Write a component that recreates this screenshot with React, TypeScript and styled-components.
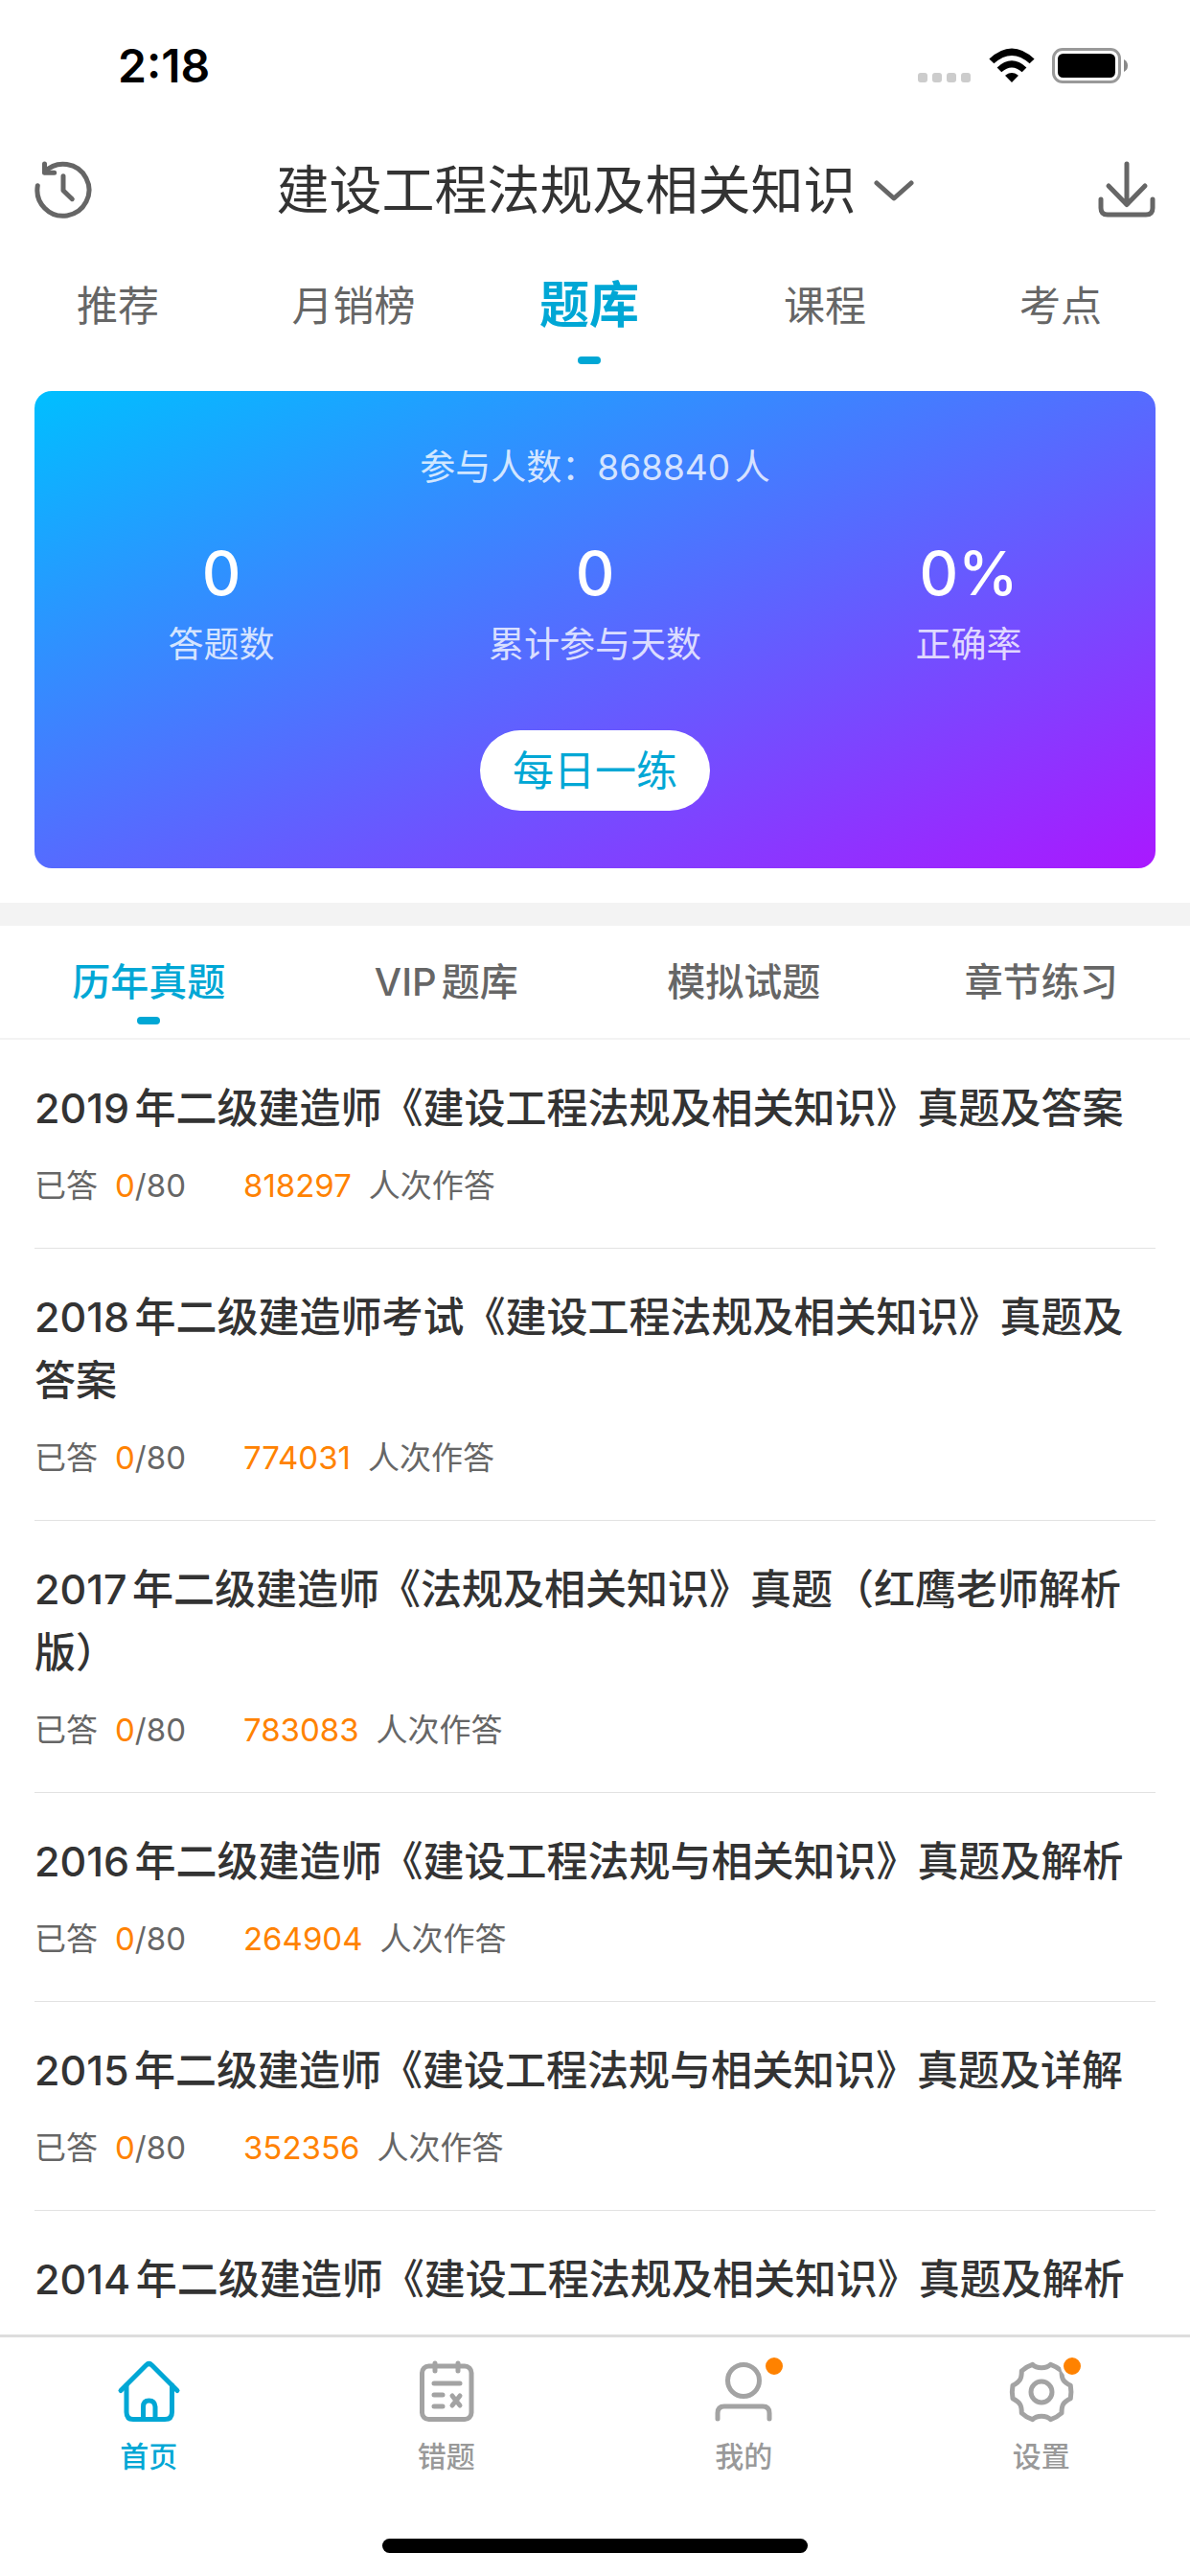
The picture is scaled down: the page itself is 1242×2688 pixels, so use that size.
import React, { useState } from "react";
import styled, { createGlobalStyle } from "styled-components";

const brand = "#00a7d5";
const orange = "#ff8200";

const GlobalStyle = createGlobalStyle`
  * { box-sizing: border-box; }
  html, body, #root { height: 100%; }
  body {
    margin: 0;
    background: #fff;
    color: #333;
    font-family: Inter, "Noto Sans CJK SC", sans-serif;
    text-autospace: normal;
  }
  button {
    margin: 0;
    padding: 0;
    border: 0;
    background: none;
    font: inherit;
    color: inherit;
    cursor: pointer;
  }
  h1, h2, p, ul, dl, dd { margin: 0; padding: 0; }
  svg { display: block; }
`;

const Screen = styled.div`
  display: flex;
  flex-direction: column;
  height: 100vh;
  overflow: hidden;
`;

const StatusBar = styled.div`
  display: flex;
  flex: none;
  align-items: center;
  justify-content: space-between;
  height: 132px;
  padding: 5px 64px 0 123px;
  color: #000;
`;

const Clock = styled.time`
  font-size: 48px;
  font-weight: 600;
  line-height: 60px;
`;

const StatusIcons = styled.div`
  display: flex;
  align-items: center;
  gap: 18px;
`;

const Header = styled.header`
  display: flex;
  flex: none;
  align-items: center;
  justify-content: space-between;
  height: 132px;
  padding: 0 36px;
`;

const IconButton = styled.button`
  display: block;
  width: 60px;
  height: 60px;
  color: #666;
`;

const SubjectButton = styled.button`
  display: flex;
  align-items: center;
  gap: 18px;
  color: #666;
`;

const Subject = styled.h1`
  color: #333;
  font-size: 55px;
  font-weight: 400;
  line-height: 72px;
`;

const Marker = styled.span`
  position: absolute;
  bottom: 0;
  left: 50%;
  width: 24px;
  height: 8px;
  margin-left: -12px;
  border-radius: 4px;
  background: ${brand};
`;

const ChannelTabs = styled.nav`
  display: grid;
  flex: none;
  grid-template-columns: repeat(5, 1fr);
  height: 132px;
  padding: 0 12px 16px 0;
`;

const ChannelTab = styled.button<{ $active: boolean }>`
  position: relative;
  padding-bottom: 6px;
  color: ${(p) => (p.$active ? brand : "#666")};
  font-size: ${(p) => (p.$active ? 52 : 43)}px;
  font-weight: ${(p) => (p.$active ? 700 : 400)};
  line-height: 64px;
`;

const CardArea = styled.section`
  flex: none;
  padding: 12px 36px 36px;
  border-bottom: 24px solid #f3f3f3;
`;

const Card = styled.div`
  display: flex;
  flex-direction: column;
  align-items: center;
  padding: 56px 0 60px;
  border-radius: 18px;
  background: linear-gradient(to bottom right, #00bfff, #aa18ff);
  color: rgba(255, 255, 255, 0.8);
  font-size: 37px;
  line-height: 48px;
`;

const Stats = styled.dl`
  display: grid;
  grid-template-columns: repeat(3, 1fr);
  width: 100%;
  margin: 44px 0 65px;
`;

const Stat = styled.div`
  display: flex;
  flex-direction: column-reverse;
  align-items: center;
  gap: 9px;
`;

const StatValue = styled.dd`
  color: #fff;
  font-size: 63px;
  font-weight: 500;
  line-height: 84px;
`;

const DailyButton = styled.button`
  width: 240px;
  height: 84px;
  border-radius: 42px;
  background: #fff;
  color: ${brand};
  font-size: 43px;
  line-height: 84px;
`;

const PaperTabs = styled.nav`
  display: grid;
  flex: none;
  grid-template-columns: repeat(4, 1fr);
  height: 119px;
  padding-bottom: 14px;
  border-bottom: 2px solid #f3f3f3;
`;

const PaperTab = styled.button<{ $active: boolean }>`
  position: relative;
  padding-top: 15px;
  color: ${(p) => (p.$active ? brand : "#666")};
  font-size: 40px;
  font-weight: 500;
  line-height: 60px;
`;

const PaperList = styled.ul`
  flex: 1;
  min-height: 0;
  padding: 0 36px;
  overflow: hidden;
  list-style: none;
`;

const Paper = styled.li`
  padding: 38px 0 41px;
  border-bottom: 1px solid #e2e2e2;
`;

const PaperTitle = styled.h2`
  font-size: 43px;
  font-weight: 500;
  line-height: 66px;
`;

const PaperMeta = styled.p`
  display: flex;
  margin-top: 24px;
  gap: 60px;
  color: #666;
  font-size: 33px;
  line-height: 48px;
`;

const MetaPart = styled.span`
  display: flex;
  gap: 18px;
`;

const Highlight = styled.span`
  color: ${orange};
`;

const BottomBar = styled.nav`
  display: grid;
  flex: none;
  grid-template-columns: repeat(4, 1fr);
  border-top: 3px solid #ddd;
`;

const BottomTab = styled.button<{ $active: boolean }>`
  display: flex;
  flex-direction: column;
  align-items: center;
  padding: 21px 0 0;
  gap: 11px;
  color: ${(p) => (p.$active ? brand : "#999")};
  font-size: 30px;
  font-weight: 500;
  line-height: 40px;
`;

const IconWithBadge = styled.span<{ $active: boolean }>`
  position: relative;
  display: block;
  color: ${(p) => (p.$active ? brand : "#a3a3a3")};
`;

const Badge = styled.i`
  position: absolute;
  top: -3px;
  right: -8px;
  width: 24px;
  height: 24px;
  border: 3px solid #fff;
  border-radius: 50%;
  background: ${orange};
`;

const HomeIndicator = styled.div`
  flex: none;
  align-self: center;
  width: 444px;
  height: 15px;
  margin: 66px 0 24px;
  border-radius: 8px;
  background: #000;
`;

const Signal = () => (
  <svg width="56" height="38" viewBox="0 0 56 38" fill="#ccc" aria-hidden="true">
    {[0, 15, 30, 45].map((x) => (
      <rect key={x} x={x} y="26" width="10" height="10" rx="3" />
    ))}
  </svg>
);

const Wifi = () => (
  <svg width="48" height="38" viewBox="0 0 48 38" aria-hidden="true">
    <path d="M24 36 17.4 29.2Q17 28.6 17.7 28.2Q24 23.9 30.3 28.2Q31 28.6 30.6 29.2Z" />
    <path d="M8.6 20.4Q24 6 39.4 20.4L34.7 25.2Q24 15.6 13.3 25.2Z" />
    <path d="M.4 11.4Q24-10.6 47.6 11.4L42.6 16.2Q24-.4 5.4 16.2Z" />
  </svg>
);

const Battery = () => (
  <svg width="80" height="38" viewBox="0 0 80 38" aria-hidden="true">
    <rect x="1.5" y="1.5" width="69" height="34" rx="9.5" fill="none" stroke="#999" strokeWidth="3" />
    <rect x="6" y="6" width="60" height="25" rx="5.5" />
    <path d="M75 12Q79 14 79 18.5T75 25Z" fill="#888" />
  </svg>
);

const HistoryIcon = () => (
  <svg width="60" height="60" viewBox="0 0 60 60" fill="none" stroke="currentColor" strokeWidth="5" strokeLinecap="round" strokeLinejoin="round" aria-hidden="true">
    <path d="M3.3 25.7A27 27 0 1 0 10.5 11.5" />
    <path d="M10.5 3V12.3H20.7" />
    <path d="M30 15.7V30.7L39.3 39.7" />
  </svg>
);

const DownloadIcon = () => (
  <svg width="60" height="60" viewBox="0 0 60 60" fill="none" stroke="currentColor" strokeWidth="5" strokeLinecap="round" strokeLinejoin="round" aria-hidden="true">
    <path d="M30 3V45M11 26 30 45.5 49 26" />
    <path d="M3 40V49Q3 56 10 56H50Q57 56 57 49V40" />
  </svg>
);

const Chevron = () => (
  <svg width="42" height="24" viewBox="0 0 42 24" fill="none" stroke="currentColor" strokeWidth="5" strokeLinecap="round" strokeLinejoin="round" aria-hidden="true">
    <path d="M3 5 21 21 39 5" />
  </svg>
);

const TabIcon = ({ children }: { children: React.ReactNode }) => (
  <svg width="72" height="72" viewBox="0 0 72 72" fill="none" stroke="currentColor" strokeWidth="5" strokeLinecap="round" strokeLinejoin="round" aria-hidden="true">
    {children}
  </svg>
);

const HomeIcon = () => (
  <TabIcon>
    <path d="M7 34.5 33.5 8Q36.500 5 39.500 8L66 34.500" />
    <path d="M13 29V57Q13 64.500 20 64.500H53Q60.500 64.500 60.500 57V29" />
    <path d="M30.500 64V51.500Q30.500 45 36.500 45T43 51.500V64" />
  </TabIcon>
);

const NoteIcon = () => (
  <TabIcon>
    <rect x="10.5" y="9" width="51.5" height="55.5" rx="7" />
    <path d="M24 6V14M48 6V14M23 27H50M23 39H32M23 51H32M42 40 50 50M50 40 42 50" />
  </TabIcon>
);

const UserIcon = () => (
  <TabIcon>
    <circle cx="36" cy="24" r="16.5" />
    <path d="M9 64V58Q9 51 16 51H56Q63 51 63 58V64" />
  </TabIcon>
);

const GearIcon = () => (
  <TabIcon>
    <circle cx="36" cy="36" r="11" />
    <path d="M26.6 7.3C31 12 41 12 45.6 7.3Q52 9.500 57 14C57 22 58 25 66.300 29.300Q67.500 36 66.300 42.700C58 47 57 50 57 58Q52 62.500 45.600 64.700C41 60 31 60 26.600 64.700Q20 62.500 15.300 58C15.300 50 14 47 6 42.700Q4.700 36 6 29.300C14 25 15.300 22 15.300 14Q20 9.500 26.600 7.300Z" />
  </TabIcon>
);

const channels = ["推荐", "月销榜", "题库", "课程", "考点"];
const paperKinds = ["历年真题", "VIP题库", "模拟试题", "章节练习"];
const stats = [
  { label: "答题数", value: "0" },
  { label: "累计参与天数", value: "0" },
  { label: "正确率", value: "0%" },
];
const papers = [
  { title: "2019年二级建造师《建设工程法规及相关知识》真题及答案", count: "818297" },
  { title: "2018年二级建造师考试《建设工程法规及相关知识》真题及答案", count: "774031" },
  { title: "2017年二级建造师《法规及相关知识》真题（红鹰老师解析版）", count: "783083" },
  { title: "2016年二级建造师《建设工程法规与相关知识》真题及解析", count: "264904" },
  { title: "2015年二级建造师《建设工程法规与相关知识》真题及详解", count: "352356" },
  { title: "2014年二级建造师《建设工程法规及相关知识》真题及解析", count: "" },
];
const pages = [
  { label: "首页", Icon: HomeIcon, badge: false },
  { label: "错题", Icon: NoteIcon, badge: false },
  { label: "我的", Icon: UserIcon, badge: true },
  { label: "设置", Icon: GearIcon, badge: true },
];

export default function App() {
  const [channel, setChannel] = useState("题库");
  const [kind, setKind] = useState("历年真题");
  const [page, setPage] = useState("首页");

  return (
    <Screen>
      <GlobalStyle />
      <StatusBar>
        <Clock>2:18</Clock>
        <StatusIcons>
          <Signal />
          <Wifi />
          <Battery />
        </StatusIcons>
      </StatusBar>
      <Header>
        <IconButton aria-label="历史记录"><HistoryIcon /></IconButton>
        <SubjectButton>
          <Subject>建设工程法规及相关知识</Subject>
          <Chevron />
        </SubjectButton>
        <IconButton aria-label="下载"><DownloadIcon /></IconButton>
      </Header>
      <ChannelTabs>
        {channels.map((name) => (
          <ChannelTab key={name} $active={name === channel} onClick={() => setChannel(name)}>
            {name}
            {name === channel && <Marker />}
          </ChannelTab>
        ))}
      </ChannelTabs>
      <CardArea>
        <Card>
          <p>参与人数：868840人</p>
          <Stats>
            {stats.map((s) => (
              <Stat key={s.label}>
                <dt>{s.label}</dt>
                <StatValue>{s.value}</StatValue>
              </Stat>
            ))}
          </Stats>
          <DailyButton>每日一练</DailyButton>
        </Card>
      </CardArea>
      <PaperTabs>
        {paperKinds.map((name) => (
          <PaperTab key={name} $active={name === kind} onClick={() => setKind(name)}>
            {name}
            {name === kind && <Marker />}
          </PaperTab>
        ))}
      </PaperTabs>
      <PaperList>
        {papers.map((paper) => (
          <Paper key={paper.title}>
            <PaperTitle>{paper.title}</PaperTitle>
            {paper.count && (
              <PaperMeta>
                <MetaPart>
                  <span>已答</span>
                  <span><Highlight>0</Highlight>/80</span>
                </MetaPart>
                <MetaPart>
                  <Highlight>{paper.count}</Highlight>
                  <span>人次作答</span>
                </MetaPart>
              </PaperMeta>
            )}
          </Paper>
        ))}
      </PaperList>
      <BottomBar>
        {pages.map(({ label, Icon, badge }) => (
          <BottomTab key={label} $active={label === page} onClick={() => setPage(label)}>
            <IconWithBadge $active={label === page}>
              <Icon />
              {badge && <Badge />}
            </IconWithBadge>
            {label}
          </BottomTab>
        ))}
      </BottomBar>
      <HomeIndicator />
    </Screen>
  );
}
